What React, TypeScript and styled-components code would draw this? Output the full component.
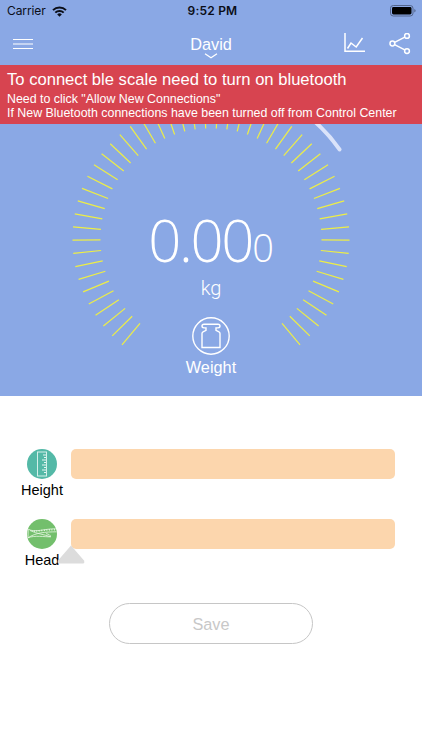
import React from "react";
import styled, { createGlobalStyle } from "styled-components";

const GlobalStyle = createGlobalStyle`
  * { box-sizing: border-box; }
  body { margin: 0; background: #fff; }
`;

const Screen = styled.main`
  width: 422px;
  height: 750px;
  display: flex;
  flex-direction: column;
  overflow: hidden;
  background: #fff;
  font-family: "Liberation Sans", Helvetica, Arial, sans-serif;
`;

const StatusBar = styled.div`
  height: 22px;
  padding: 0 6px 0 7px;
  display: grid;
  grid-template-columns: 1fr auto 1fr;
  align-items: center;
  background: #8aa8e5;
  color: #0b0e18;
  font: 400 12px/22px Inter, sans-serif;
`;

const Carrier = styled.div`
  display: flex;
  align-items: center;
  gap: 6px;
  letter-spacing: -0.1px;
`;

const Clock = styled.div`
  padding-left: 2px;
  font-weight: 600;
  letter-spacing: 0.2px;
`;

const BatterySlot = styled.div`
  display: flex;
  justify-content: flex-end;
`;

const NavBar = styled.header`
  height: 43px;
  padding: 0 11px 0 13px;
  display: grid;
  grid-template-columns: 1fr auto 1fr;
  align-items: center;
  background: #8aa8e5;
  color: #fff;
`;

const UserButton = styled.button`
  display: flex;
  flex-direction: column;
  align-items: center;
  padding: 6px 2px 0 0;
  border: 0;
  background: none;
  color: inherit;
  font: 16.3px/18px "Liberation Sans", sans-serif;
`;

const NavActions = styled.div`
  display: flex;
  justify-content: flex-end;
  gap: 24px;
`;

const Icon = styled.svg`
  display: block;
  flex: none;
  fill: none;
  stroke: currentColor;
`;

const Banner = styled.section`
  height: 59px;
  padding: 5px 7px 0;
  background: #d74450;
  color: #fff;
`;

const BannerTitle = styled.h1`
  margin: 0 0 3px;
  font-size: 16.6px;
  line-height: 19px;
  font-weight: 400;
  white-space: nowrap;
`;

const BannerLine = styled.p`
  margin: 0;
  font-size: 12.4px;
  line-height: 14px;
  white-space: nowrap;
`;

const Gauge = styled.section`
  position: relative;
  height: 272px;
  padding-top: 83px;
  display: flex;
  flex-direction: column;
  align-items: center;
  background: #8aa8e5;
  color: #fff;
`;

const Dial = styled.svg`
  position: absolute;
  inset: 0;
  fill: none;
`;

const Reading = styled.div`
  display: flex;
  align-items: baseline;
  height: 66px;
  font: 300 58px/66px "Open Sans", sans-serif;
  letter-spacing: -2.3px;
`;

const MinorDigit = styled.span`
  font-size: 38px;
  line-height: 38px;
  letter-spacing: 0;
`;

const Unit = styled.div`
  margin-top: 3px;
  height: 24px;
  font: 300 20px/24px Roboto, sans-serif;
`;

const WeightIcon = styled(Icon)`
  margin-top: 17px;
`;

const WeightLabel = styled.div`
  margin-top: 3px;
  font-size: 16.3px;
  line-height: 18px;
`;

const Measures = styled.section`
  padding: 53px 27px 0 13px;
  display: flex;
  flex-direction: column;
  gap: 18px;
`;

const MeasureRow = styled.div`
  display: grid;
  grid-template-columns: 58px 1fr;
  height: 52px;
  position: relative;
`;

const MeasureName = styled.div`
  display: flex;
  flex-direction: column;
  align-items: center;
  gap: 2px;
  font-size: 14.5px;
  line-height: 18px;
  color: #000;
`;

const Track = styled.div`
  height: 30px;
  border-radius: 5px;
  background: #fcd6ad;
`;

const Thumb = styled.svg`
  position: absolute;
  left: 44px;
  top: 26px;
`;

const SaveButton = styled.button`
  align-self: center;
  width: 204px;
  height: 41px;
  margin-top: 32px;
  border: 1px solid #c6c6c6;
  border-radius: 21px;
  background: #fff;
  color: #c8c8c8;
  font: 16.3px/38px "Liberation Sans", sans-serif;
`;

const CX = 211;
const CY = 114.8;
const TICKS = 52;

function point(radius: number, degrees: number) {
  const a = (degrees * Math.PI) / 180;
  return { x: CX + radius * Math.cos(a), y: CY - radius * Math.sin(a) };
}

function GaugeDial() {
  const ticks = Array.from({ length: TICKS }, (_, i) => {
    const angle = -50 + (280 * i) / (TICKS - 1);
    const inner = point(110.5, angle);
    const outer = point(138.5, angle);
    return <line key={i} x1={inner.x} y1={inner.y} x2={outer.x} y2={outer.y} />;
  });
  const start = point(156.5, 60);
  const end = point(156.5, 34.8);
  return (
    <Dial width="422" height="272" viewBox="0 0 422 272">
      <g stroke="#eeee45" strokeWidth="1.2">{ticks}</g>
      <path
        d={`M${start.x} ${start.y}A156.5 156.5 0 0 1 ${end.x} ${end.y}`}
        stroke="#dae3fa"
        strokeWidth="4"
        strokeLinecap="round"
      />
    </Dial>
  );
}

const RulerIcon = () => (
  <Icon width="30" height="30" viewBox="0 0 30 30">
    <circle cx="15" cy="15" r="15" fill="#54b9a7" stroke="none" />
    <rect x="10.5" y="3" width="9" height="24" stroke="#d4f0ea" strokeWidth="1" />
    <path
      d="M19 6h-3M19 8.5h-2M19 11h-4M19 13.5h-2M19 16h-4M19 18.5h-2M19 21h-4M19 23.5h-2"
      stroke="#e5f6f2"
      strokeWidth="1"
    />
  </Icon>
);

const TapeIcon = () => (
  <Icon width="30" height="30" viewBox="0 0 30 30">
    <circle cx="15" cy="15" r="15" fill="#73bf6c" stroke="none" />
    <g stroke="#e8f7e5" strokeWidth="0.8">
      <path d="M1.2 10.2C8 14 18 9.5 28.8 9.8M1.2 10.2L1 18.8C9 13.5 18 13 29.5 12.8M1 18.8C8 16 17 18 23.5 17.8C23.8 16.2 22 15.3 19 14.6M3 11.5C10 15 18 15.5 23.5 17.8" />
      <path strokeDasharray="0.9 1.6" strokeWidth="1.6" d="M7 12.2C13 12 21 10.4 28.5 10.7" />
    </g>
  </Icon>
);

export default function App() {
  return (
    <Screen>
      <GlobalStyle />
      <StatusBar>
        <Carrier>
          Carrier
          <Icon width="15" height="11" viewBox="0 0 15 11" strokeWidth="2">
            <path d="M1 4.1a9.3 9.3 0 0 1 13 0M3.3 6.6a6 6 0 0 1 8.4 0" />
            <path d="M7.5 10.7L5.2 8.4a3.3 3.3 0 0 1 4.6 0z" fill="currentColor" stroke="none" />
          </Icon>
        </Carrier>
        <Clock>9:52 PM</Clock>
        <BatterySlot>
          <Icon width="26" height="12" viewBox="0 0 26 12">
            <rect x="0.5" y="0.5" width="22.5" height="10.5" rx="2.8" stroke="#53658c" />
            <rect x="2" y="2" width="19.5" height="7.5" rx="1.4" fill="#000" stroke="none" />
            <path d="M24.3 4v3.6q1.3-.5 1.3-1.8T24.3 4z" fill="#53658c" stroke="none" />
          </Icon>
        </BatterySlot>
      </StatusBar>
      <NavBar>
        <Icon width="20" height="12" viewBox="0 0 20 12" strokeWidth="1.1">
          <path d="M0 1.5h20M0 6h20M0 10.5h20" />
        </Icon>
        <UserButton>
          David
          <Icon width="14" height="6" viewBox="0 0 14 6" strokeWidth="1.3">
            <path d="M1 .8l6 4 6-4" />
          </Icon>
        </UserButton>
        <NavActions>
          <Icon width="21" height="20" viewBox="0 0 21 20" strokeWidth="1.5">
            <path d="M1 0v18.3h20M3.5 15.5L7 10l5.2 4L18.5 5" />
          </Icon>
          <Icon width="22" height="22" viewBox="0 0 22 22" strokeWidth="1.5">
            <circle cx="3.4" cy="10.5" r="2.4" />
            <circle cx="18" cy="2.9" r="2.4" />
            <circle cx="18" cy="18.1" r="2.4" />
            <path d="M5.6 9.3l10.2-5.2M5.6 11.7l10.2 5.2" />
          </Icon>
        </NavActions>
      </NavBar>
      <Banner>
        <BannerTitle>To connect ble scale need to turn on bluetooth</BannerTitle>
        <BannerLine>Need to click "Allow New Connections"</BannerLine>
        <BannerLine>If New Bluetooth connections have been turned off from Control Center</BannerLine>
      </Banner>
      <Gauge>
        <GaugeDial />
        <Reading>
          0.00<MinorDigit>0</MinorDigit>
        </Reading>
        <Unit>kg</Unit>
        <WeightIcon width="38" height="38" viewBox="0 0 38 38" strokeWidth="1.4">
          <circle cx="19" cy="19" r="18.2" />
          <path d="M12 7.3h14q2 0 2 1.8t-2 1.8h-2v2.4l3 1.6q1 .5 1 1.6v14h-18v-14q0-1.1 1-1.6l3-1.6v-2.4h-2q-2 0-2-1.8t2-1.8z" />
        </WeightIcon>
        <WeightLabel>Weight</WeightLabel>
      </Gauge>
      <Measures>
        <MeasureRow>
          <MeasureName>
            <RulerIcon />
            Height
          </MeasureName>
          <Track />
        </MeasureRow>
        <MeasureRow>
          <MeasureName>
            <TapeIcon />
            Head
          </MeasureName>
          <Track />
          <Thumb width="28" height="19" viewBox="0 0 28 19">
            <path d="M14 .5L27 15.5Q28 18.5 26 18.5H2Q0 18.5 1 15.5z" fill="#dcdcdc" />
          </Thumb>
        </MeasureRow>
      </Measures>
      <SaveButton>Save</SaveButton>
    </Screen>
  );
}
